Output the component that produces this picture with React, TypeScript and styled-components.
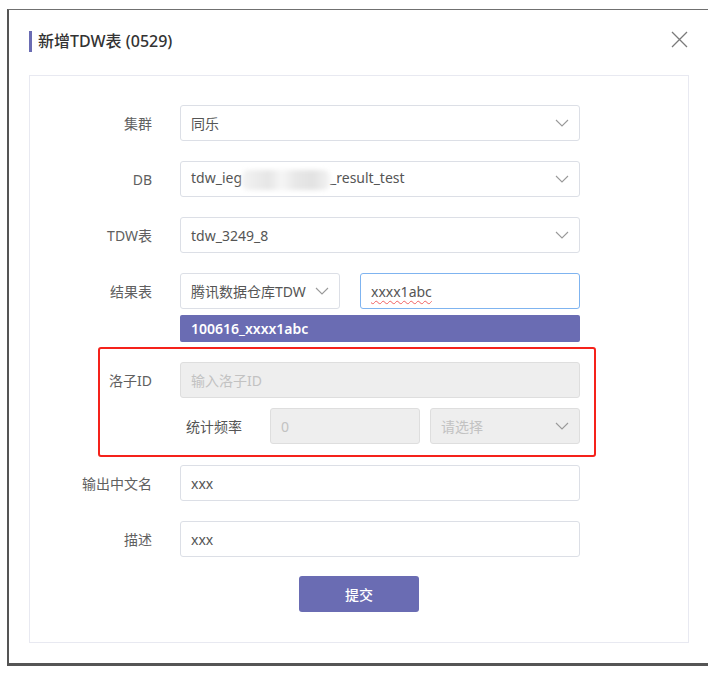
import React from "react";
import styled, { createGlobalStyle } from "styled-components";

const GlobalStyle = createGlobalStyle`
  html, body {
    margin: 0;
    padding: 0;
    background: #ffffff;
  }
  body {
    font-family: "Noto Sans", "Noto Sans CJK SC", sans-serif;
    color: #555;
  }
  * { box-sizing: border-box; }
`;

const Page = styled.div`
  padding: 9px 0 0 7px;
`;

const Dialog = styled.div`
  width: 701px;
  border-top: 1px solid #707070;
  border-left: 2px solid #555;
  border-bottom: 3px solid #555;
  background: #fff;
  padding-bottom: 20px;
`;

const Header = styled.div`
  display: flex;
  align-items: flex-start;
  justify-content: space-between;
  padding: 21px 20px 0 20px;
`;

const TitleWrap = styled.div`
  display: flex;
  align-items: center;
  height: 21px;
`;

const TitleBar = styled.span`
  width: 3px;
  height: 21px;
  background: #6a6cb3;
  margin-right: 6px;
`;

const Title = styled.h1`
  margin: 0;
  font-size: 16px;
  font-weight: 500;
  color: #333;
  line-height: 21px;
`;

const Close = styled.button`
  border: 0;
  background: none;
  padding: 0;
  width: 17px;
  height: 17px;
  display: flex;
  cursor: pointer;
`;

const Panel = styled.div`
  margin: 23px 19px 0 20px;
  border: 1px solid #e8e9f1;
  padding: 29px 0 30px 0;
`;

const Row = styled.div<{ $gap?: number }>`
  display: flex;
  align-items: center;
  margin-bottom: ${(p) => (p.$gap ?? 20)}px;
`;

const Label = styled.div<{ $w?: number }>`
  width: ${(p) => p.$w ?? 122}px;
  text-align: right;
  font-size: 14px;
  color: #606060;
  margin-right: 28px;
  white-space: nowrap;
`;

const Field = styled.div<{ $w?: number; $disabled?: boolean; $focus?: boolean }>`
  width: ${(p) => p.$w ?? 400}px;
  height: 36px;
  border: 1px solid ${(p) => (p.$focus ? "#7fb4f0" : p.$disabled ? "#dedede" : "#dcdfe6")};
  border-radius: 3px;
  background: ${(p) => (p.$disabled ? "#eeeeee" : "#fff")};
  display: flex;
  align-items: center;
  justify-content: space-between;
  padding: 0 10px 0 10px;
  font-size: 14px;
  color: #555;
  white-space: nowrap;
  overflow: hidden;
`;

const Placeholder = styled.span`
  color: #c2c2c2;
`;

const Spell = styled.span`
  text-decoration: underline wavy #f06060;
  text-decoration-thickness: 1px;
  text-underline-offset: 3px;
`;

const Blur = styled.span`
  display: inline-block;
  width: 88px;
  height: 20px;
  vertical-align: middle;
  background: linear-gradient(90deg, #f3f3f3 0%, #e6e6e6 30%, #f6f6f6 45%, #e8e8e8 60%, #e2e2e2 80%, #f4f4f4 100%);
  filter: blur(2px);
  border-radius: 6px;
`;

const Suggestion = styled.div`
  margin: -14px 0 5px 150px;
  width: 400px;
  height: 27px;
  border-radius: 2px;
  background: #6a6cb3;
  color: #fff;
  font-size: 14px;
  font-weight: 600;
  display: flex;
  align-items: center;
  padding-left: 11px;
`;

const Highlight = styled.div`
  margin: 0 0 8px 68px;
  width: 498px;
  border: 2px solid #f5221b;
  border-radius: 3px;
  padding: 13px 0 11px 0;
`;

const SubRow = styled.div`
  display: flex;
  align-items: center;
  margin-left: 80px;
`;

const SubLabel = styled.div`
  width: 62px;
  padding-left: 6px;
  font-size: 14px;
  color: #555;
  margin-right: 28px;
`;

const Actions = styled.div`
  display: flex;
  justify-content: center;
`;

const Submit = styled.button`
  width: 120px;
  height: 36px;
  border: 0;
  border-radius: 3px;
  background: #6a6cb3;
  color: #fff;
  font-family: inherit;
  font-size: 14px;
  font-weight: 500;
  cursor: pointer;
`;

const Chevron = () => (
  <svg width="14" height="8" viewBox="0 0 14 8" fill="none">
    <polyline points="1,1 7,7 13,1" stroke="#9a9a9a" strokeWidth="1.1" />
  </svg>
);

export default function App() {
  return (
    <>
      <GlobalStyle />
      <Page>
        <Dialog>
          <Header>
            <TitleWrap>
              <TitleBar />
              <Title>新增TDW表 (0529)</Title>
            </TitleWrap>
            <Close aria-label="close">
              <svg width="17" height="17" viewBox="0 0 17 17">
                <path d="M1 1 L16 16 M16 1 L1 16" stroke="#7a7a7a" strokeWidth="1.3" />
              </svg>
            </Close>
          </Header>
          <Panel>
            <Row>
              <Label>集群</Label>
              <Field>
                <span>同乐</span>
                <Chevron />
              </Field>
            </Row>
            <Row>
              <Label>DB</Label>
              <Field>
                <span>
                  tdw_ieg<Blur />_result_test
                </span>
                <Chevron />
              </Field>
            </Row>
            <Row>
              <Label>TDW表</Label>
              <Field>
                <span>tdw_3249_8</span>
                <Chevron />
              </Field>
            </Row>
            <Row>
              <Label>结果表</Label>
              <Field $w={160}>
                <span>腾讯数据仓库TDW</span>
                <Chevron />
              </Field>
              <Field $w={220} $focus style={{ marginLeft: 20 }}>
                <Spell>xxxx1abc</Spell>
              </Field>
            </Row>
            <Suggestion>100616_xxxx1abc</Suggestion>
            <Highlight>
              <Row $gap={10}>
                <Label $w={52}>洛子ID</Label>
                <Field $disabled>
                  <Placeholder>输入洛子ID</Placeholder>
                </Field>
              </Row>
              <SubRow>
                <SubLabel>统计频率</SubLabel>
                <Field $w={150} $disabled>
                  <Placeholder>0</Placeholder>
                </Field>
                <Field $w={150} $disabled style={{ marginLeft: 10 }}>
                  <Placeholder>请选择</Placeholder>
                  <Chevron />
                </Field>
              </SubRow>
            </Highlight>
            <Row>
              <Label>输出中文名</Label>
              <Field>
                <span>xxx</span>
              </Field>
            </Row>
            <Row $gap={19}>
              <Label>描述</Label>
              <Field>
                <span>xxx</span>
              </Field>
            </Row>
            <Actions>
              <Submit>提交</Submit>
            </Actions>
          </Panel>
        </Dialog>
      </Page>
    </>
  );
}
